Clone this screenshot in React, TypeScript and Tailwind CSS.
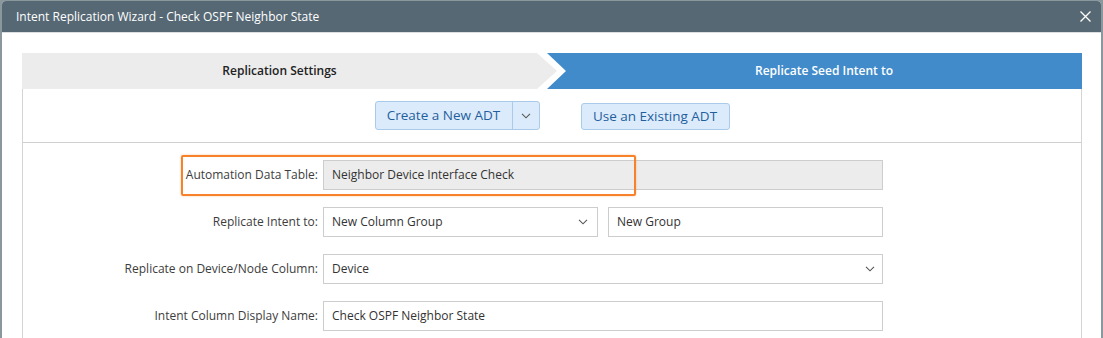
import React from 'react';

const font = { fontFamily: '"Open Sans", "Noto Sans", sans-serif' };

function Chevron({ className = '' }: { className?: string }) {
  return (
    <svg width="10" height="6" viewBox="0 0 10 6" className={className}>
      <path d="M1 0.8 L5 4.8 L9 0.8" fill="none" stroke="#555" strokeWidth="1.1" />
    </svg>
  );
}

function Row({ label, children }: { label: string; children: React.ReactNode }) {
  return (
    <div className="flex items-center">
      <div className="w-[300px] pr-[5px] text-right text-[12px] text-[#3d3d3d]">{label}</div>
      <div className="w-[560px]">{children}</div>
    </div>
  );
}

export default function App() {
  return (
    <div className="w-[1103px] h-[338px] bg-[#8a979d] pt-[1px] px-[2px] overflow-hidden" style={font}>
      <div className="h-full bg-white rounded-t-[4px] overflow-hidden">
        {/* title bar */}
        <div className="h-[32px] bg-[#566874] flex items-center justify-between pl-[14px] pr-[10px] border-b border-[#dcdfe1]">
          <span className="text-white text-[12px]">Intent Replication Wizard - Check OSPF Neighbor State</span>
          <svg width="11" height="11" viewBox="0 0 11 11">
            <path d="M0.5 0.5 L10.5 10.5 M10.5 0.5 L0.5 10.5" stroke="#fff" strokeWidth="1.3" />
          </svg>
        </div>

        <div className="pt-[20px] pl-[20px]">
          {/* wizard steps */}
          <div className="flex h-[36px] w-[1060px]">
            <div className="w-[535px] h-full bg-[#ececec] flex items-center justify-center pr-[20px] [clip-path:polygon(0_0,515px_0,100%_50%,515px_100%,0_100%)]">
              <span className="text-[12px] font-semibold text-[#222]">Replication Settings</span>
            </div>
            <div className="w-[535px] -ml-[10px] h-full bg-[#418bca] flex items-center justify-center pl-[19px] [clip-path:polygon(0_0,100%_0,100%_100%,0_100%,19px_50%)]">
              <span className="text-[12px] font-semibold text-white">Replicate Seed Intent to</span>
            </div>
          </div>

          {/* panel */}
          <div className="w-[1060px] border-l border-r border-[#d4d4d4] h-[260px]">
            <div className="h-[54px] border-b border-[#cfcfcf] flex items-start justify-center gap-[41px] pt-[12px]">
              <div className="flex h-[29px] rounded-[3px] border border-[#a9cbe9] bg-[#dcebfb] text-[#1f5f9d] text-[13.5px]">
                <div className="w-[137px] flex items-center justify-center border-r border-[#a9cbe9]">Create a New ADT</div>
                <div className="w-[26px] flex items-center justify-center">
                  <Chevron />
                </div>
              </div>
              <div className="mt-[2px] h-[27px] w-[149px] rounded-[3px] border border-[#a9cbe9] bg-[#dcebfb] text-[#1f5f9d] text-[13.5px] flex items-center justify-center">
                Use an Existing ADT
              </div>
            </div>

            <div className="pt-[17px] flex flex-col gap-[17px]">
              <div className="relative">
                <Row label="Automation Data Table:">
                  <div className="h-[30px] bg-[#ececec] border border-[#cdcdcd] flex items-center px-[8px] text-[12px] text-[#333]">
                    Neighbor Device Interface Check
                  </div>
                </Row>
                <div className="absolute left-[158px] top-[-5px] w-[455px] h-[41px] border-2 border-[#f7822a] rounded-[2px] shadow-[0_0_2px_rgba(247,130,42,0.5)]" />
              </div>

              <Row label="Replicate Intent to:">
                <div className="flex gap-[10px]">
                  <div className="w-[275px] h-[30px] border border-[#cdcdcd] flex items-center justify-between pl-[8px] pr-[9px] text-[12px] text-[#333]">
                    <span>New Column Group</span>
                    <Chevron />
                  </div>
                  <div className="w-[275px] h-[30px] border border-[#cdcdcd] flex items-center px-[8px] text-[12px] text-[#333]">
                    New Group
                  </div>
                </div>
              </Row>

              <Row label="Replicate on Device/Node Column:">
                <div className="h-[30px] border border-[#cdcdcd] flex items-center justify-between pl-[8px] pr-[7px] text-[12px] text-[#333]">
                  <span>Device</span>
                  <Chevron />
                </div>
              </Row>

              <Row label="Intent Column Display Name:">
                <div className="h-[30px] border border-[#cdcdcd] flex items-center px-[8px] text-[12px] text-[#333]">
                  Check OSPF Neighbor State
                </div>
              </Row>
            </div>
          </div>
        </div>
      </div>
    </div>
  );
}
